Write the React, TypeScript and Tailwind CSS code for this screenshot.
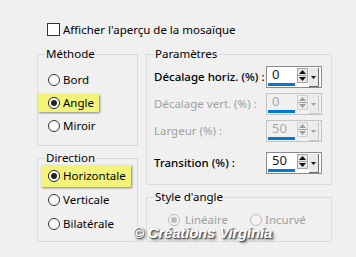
import React from "react";

const FONT = { fontFamily: '"Noto Sans", "Open Sans", sans-serif' };

function Radio({ checked, disabled }: { checked?: boolean; disabled?: boolean }) {
  return (
    <span
      className={
        "flex items-center justify-center w-[12px] h-[12px] rounded-full border shrink-0 " +
        (disabled
          ? "border-[#bcbcbc] bg-[#f4f4f4]"
          : checked
            ? "border-[#222] bg-white"
            : "border-[#333] bg-white")
      }
    >
      {checked && (
        <span
          className={
            "w-[6px] h-[6px] rounded-full " + (disabled ? "bg-[#bcbcbc]" : "bg-[#222]")
          }
        />
      )}
    </span>
  );
}

function RadioRow({
  label,
  checked,
  highlight,
}: {
  label: string;
  checked?: boolean;
  highlight?: boolean;
}) {
  return (
    <div className="h-[23px] flex items-center">
      <span
        className={
          "h-[18px] flex items-center gap-[3px] pl-[10px] pr-[5px] " +
          (highlight ? "bg-[#f3f37a] shadow-[1px_1px_2px_rgba(0,0,0,0.45)]" : "")
        }
      >
        <Radio checked={checked} />
        <span className="text-[11.5px] leading-none text-black">{label}</span>
      </span>
    </div>
  );
}

function Spin({ value, disabled }: { value: string; disabled?: boolean }) {
  return (
    <div
      className={
        "w-[56px] h-[22px] border flex items-stretch " +
        (disabled ? "border-[#c4c4c4] bg-[#f0f0f0]" : "border-[#8a8a8a] bg-white")
      }
    >
      <div className="w-[30px] flex flex-col justify-end pl-[1px] pb-[1px]">
        <span
          className={
            "pl-[4px] text-[13px] leading-[15px] " +
            (disabled ? "text-[#a8a8a8]" : "text-[#1a1a1a]")
          }
        >
          {value}
        </span>
        <span className="mt-[1px] h-[3px] w-[27px] bg-[#0078d7]" />
      </div>
      <div className="flex items-start pt-[1px] gap-[1px]">
        <div
          className={
            "w-[11px] h-[15px] flex flex-col border " +
            (disabled ? "border-[#cfcfcf] bg-[#ececec]" : "border-[#a6a6a6] bg-[#e6e6e6]")
          }
        >
          <div className="flex-1 flex items-center justify-center border-b border-[#a6a6a6]">
            <svg width="7" height="4" viewBox="0 0 7 4">
              <path d="M3.5 0 L7 4 L0 4 Z" fill={disabled ? "#a0a0a0" : "#111"} />
            </svg>
          </div>
          <div className="flex-1 flex items-center justify-center">
            <svg width="7" height="4" viewBox="0 0 7 4">
              <path d="M0 0 L7 0 L3.5 4 Z" fill={disabled ? "#a0a0a0" : "#111"} />
            </svg>
          </div>
        </div>
        <div
          className={
            "w-[10px] h-[19px] flex items-center justify-center border-r border-b " +
            (disabled ? "border-[#c8c8c8] bg-[#ececec]" : "border-[#6a6a6a] bg-[#e9e9e9]")
          }
        >
          <svg width="5" height="3" viewBox="0 0 5 3">
            <path d="M0 0 L5 0 L2.5 3 Z" fill={disabled ? "#a0a0a0" : "#111"} />
          </svg>
        </div>
      </div>
    </div>
  );
}

function ParamRow({
  label,
  value,
  disabled,
  className,
}: {
  label: string;
  value: string;
  disabled?: boolean;
  className?: string;
}) {
  return (
    <div className={"h-[22px] flex items-center justify-between " + (className ?? "")}>
      <span
        className={
          "text-[11.5px] leading-none " +
          (disabled ? "text-[#a0a0a0]" : "text-black font-medium")
        }
      >
        {label}
      </span>
      <Spin value={value} disabled={disabled} />
    </div>
  );
}

export default function App() {
  return (
    <div className="w-[356px] h-[257px] bg-[#f0f0f0] relative overflow-hidden" style={FONT}>
      <div className="pt-[23px] pl-[47px] flex items-center h-[36px]">
        <span className="w-[13px] h-[13px] border border-[#333] bg-white" />
        <span className="ml-[3px] text-[11.5px] leading-none text-black">
          Afficher l'aperçu de la mosaïque
        </span>
      </div>

      <div className="flex mt-[10px] ml-[37px]">
        <div className="w-[101px] flex flex-col">
          <fieldset className="h-[100px] border border-[#dcdcdc]">
            <legend className="ml-[7px] px-[1px] text-[11.5px] leading-[16px] text-black">
              Méthode
            </legend>
            <div className="pt-[6px]">
              <RadioRow label="Bord" />
              <RadioRow label="Angle" checked highlight />
              <RadioRow label="Miroir" />
            </div>
          </fieldset>
          <fieldset className="mt-[4px] h-[92px] border border-[#dcdcdc]">
            <legend className="ml-[7px] px-[1px] text-[11.5px] leading-[16px] text-black">
              Direction
            </legend>
            <div className="-mt-[2px] flex flex-col">
              <div className="h-[24px] flex items-center">
                <span className="h-[22px] flex items-center gap-[3px] pl-[7px] pr-[5px] ml-[3px] bg-[#f3f37a] shadow-[1px_1px_2px_rgba(0,0,0,0.45)]">
                  <Radio checked />
                  <span className="text-[11.5px] leading-none text-black">Horizontale</span>
                </span>
              </div>
              <div className="h-[24px] flex items-center pl-[10px] gap-[3px]">
                <Radio />
                <span className="text-[11.5px] leading-none text-black">Verticale</span>
              </div>
              <div className="h-[24px] flex items-center pl-[10px] gap-[3px]">
                <Radio />
                <span className="text-[11.5px] leading-none text-black">Bilatérale</span>
              </div>
            </div>
          </fieldset>
        </div>

        <div className="w-[186px] ml-[8px] flex flex-col">
          <fieldset className="h-[139px] border border-[#dcdcdc] pl-[7px] pr-[9px]">
            <legend className="px-[1px] text-[11.5px] leading-[16px] text-black">
              Paramètres
            </legend>
            <div className="pt-[4px] flex flex-col">
              <ParamRow label="Décalage horiz. (%) :" value="0" />
              <ParamRow className="mt-[5px]" label="Décalage vert. (%) :" value="0" disabled />
              <ParamRow className="mt-[5px]" label="Largeur (%) :" value="50" disabled />
              <ParamRow className="mt-[10px]" label="Transition (%) :" value="50" />
            </div>
          </fieldset>
          <fieldset className="mt-[4px] h-[53px] border border-[#dcdcdc] pl-[7px]">
            <legend className="px-[1px] text-[11.5px] leading-[16px] text-black">
              Style d'angle
            </legend>
            <div className="flex items-center h-[24px] mt-[3px] pl-[14px]">
              <Radio checked disabled />
              <span className="ml-[5px] w-[65px] text-[11.5px] leading-none text-[#a0a0a0]">
                Linéaire
              </span>
              <Radio disabled />
              <span className="ml-[3px] text-[11.5px] leading-none text-[#a0a0a0]">Incurvé</span>
            </div>
          </fieldset>
        </div>
      </div>

      <div
        className="absolute left-[133px] top-[225px] text-[15px] font-bold italic text-white tracking-[-0.2px] leading-none"
        style={{
          fontFamily: '"Liberation Sans", sans-serif',
          textShadow: "1px 1px 1px #444, 2px 2px 3px #777",
        }}
      >
        © Créations Virginia
      </div>
    </div>
  );
}
